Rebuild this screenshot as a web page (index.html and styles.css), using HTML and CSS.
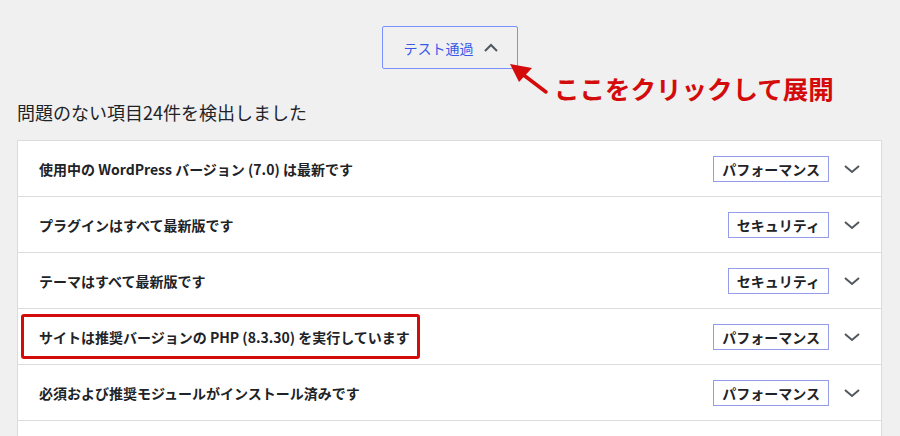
FILE: index.html
```html
<!DOCTYPE html>
<html lang="ja">
<head>
  <meta charset="UTF-8" />
  <meta name="viewport" content="width=device-width, initial-scale=1.0"/>
  <title>サイトヘルス</title>
  <link rel="stylesheet" href="styles.css">
</head>
<body>
  <div class="page">
    <div class="toggle-wrap">
      <button class="toggle">
        テスト通過
        <svg class="chev-up" width="16" height="16" viewBox="0 0 16 16"><path d="M2 11 L8 5 L14 11" fill="none" stroke="#50575e" stroke-width="2"/></svg>
      </button>
    </div>

    <svg class="note-arrow" width="60" height="50" viewBox="500 55 60 50">
      <line x1="546" y1="92" x2="521" y2="73" stroke="#d40b0b" stroke-width="3.5" stroke-linecap="round"/>
      <polygon points="510,64 532,68 519,82" fill="#d40b0b"/>
    </svg>
    <div class="note-text">ここをクリックして展開</div>

    <h2 class="passed-title">問題のない項目24件を検出しました</h2>

    <div class="list">
      <div class="row">
        <span class="row-title">使用中の WordPress バージョン (7.0) は最新です</span>
        <span class="badge">パフォーマンス</span>
        <svg class="chev" width="18" height="18" viewBox="0 0 18 18"><path d="M2 6 L9 12 L16 6" fill="none" stroke="#50575e" stroke-width="2"/></svg>
      </div>
      <div class="row">
        <span class="row-title">プラグインはすべて最新版です</span>
        <span class="badge">セキュリティ</span>
        <svg class="chev" width="18" height="18" viewBox="0 0 18 18"><path d="M2 6 L9 12 L16 6" fill="none" stroke="#50575e" stroke-width="2"/></svg>
      </div>
      <div class="row">
        <span class="row-title">テーマはすべて最新版です</span>
        <span class="badge">セキュリティ</span>
        <svg class="chev" width="18" height="18" viewBox="0 0 18 18"><path d="M2 6 L9 12 L16 6" fill="none" stroke="#50575e" stroke-width="2"/></svg>
      </div>
      <div class="row">
        <span class="row-title">サイトは推奨バージョンの PHP (8.3.30) を実行しています</span>
        <span class="badge">パフォーマンス</span>
        <svg class="chev" width="18" height="18" viewBox="0 0 18 18"><path d="M2 6 L9 12 L16 6" fill="none" stroke="#50575e" stroke-width="2"/></svg>
        <span class="highlight"></span>
      </div>
      <div class="row">
        <span class="row-title">必須および推奨モジュールがインストール済みです</span>
        <span class="badge">パフォーマンス</span>
        <svg class="chev" width="18" height="18" viewBox="0 0 18 18"><path d="M2 6 L9 12 L16 6" fill="none" stroke="#50575e" stroke-width="2"/></svg>
      </div>
      <div class="row row-next">
        <span class="row-title"></span>
        <span class="badge badge-empty"></span>
        <svg class="chev" width="18" height="18" viewBox="0 0 18 18"><path d="M2 6 L9 12 L16 6" fill="none" stroke="#50575e" stroke-width="2"/></svg>
      </div>
    </div>
  </div>
</body>
</html>
```

FILE: styles.css
```css
body {
  margin: 0;
  font-family: "Noto Sans CJK JP", "Noto Sans", sans-serif;
  background-color: #f0f0f1;
  color: #1d2327;
  overflow: hidden;
}

.page {
  position: relative;
  padding: 26px 18px 0 17px;
}

.toggle-wrap {
  display: flex;
  justify-content: center;
}

.toggle {
  display: flex;
  align-items: center;
  gap: 9px;
  width: 136px;
  height: 43px;
  padding: 0 0 0 21px;
  background: #f0f0f1;
  border: 1px solid #7b90ff;
  border-radius: 2px;
  color: #3858e9;
  font-family: inherit;
  font-size: 14px;
  cursor: pointer;
}

.note-arrow {
  position: absolute;
  left: 500px;
  top: 55px;
}

.note-text {
  position: absolute;
  left: 554px;
  top: 70px;
  font-size: 25.5px;
  font-weight: 700;
  color: #d40b0b;
  line-height: 36px;
}

.passed-title {
  margin: 29px 0 14px;
  font-size: 18px;
  font-weight: 400;
  line-height: 28px;
}

.list {
  background: #fff;
  border: 1px solid #dcdcde;
}

.row {
  position: relative;
  display: flex;
  align-items: center;
  height: 55px;
  padding: 0 20px 0 21px;
  border-top: 1px solid #dcdcde;
}

.row:first-child {
  border-top: none;
}

.row-title {
  flex: 1;
  font-size: 14px;
  font-weight: 700;
}

.badge {
  border: 1px solid #959ce9;
  padding: 0 8px;
  height: 24px;
  line-height: 24px;
  font-size: 14px;
  font-weight: 600;
}

.badge-empty {
  width: 98px;
}

.chev {
  margin-left: 14px;
}

.highlight {
  position: absolute;
  left: 3px;
  top: 5px;
  width: 393px;
  height: 39px;
  border: 3px solid #d40b0b;
  border-radius: 3px;
}
```
